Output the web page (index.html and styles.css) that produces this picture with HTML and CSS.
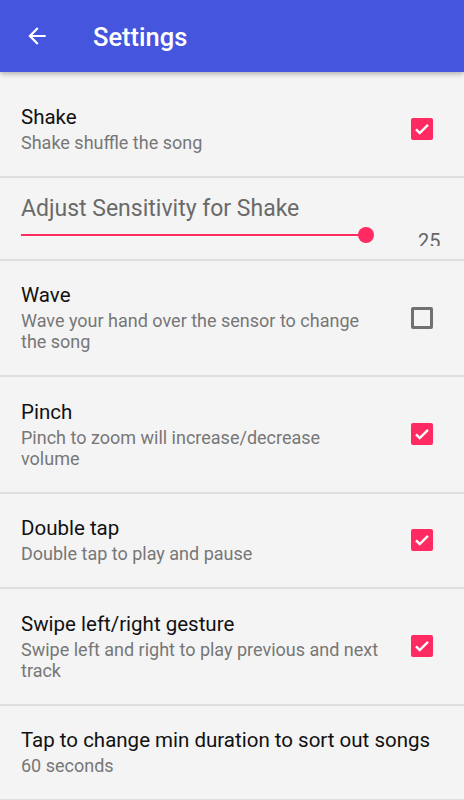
FILE: index.html
```html
<!DOCTYPE html>
<html>
<head>
<meta charset="utf-8">
<link rel="stylesheet" href="styles.css">
</head>
<body>
<header class="appbar">
  <svg class="back" width="24" height="24" viewBox="0 0 24 24"><path d="M20 11H7.83l5.59-5.59L12 4l-8 8 8 8 1.41-1.41L7.83 13H20v-2z" fill="#fff"/></svg>
  <h1 class="title">Settings</h1>
</header>
<main class="list">
  <div class="row">
    <div class="text">
      <div class="t">Shake</div>
      <div class="s">Shake shuffle the song</div>
    </div>
    <span class="cb on"><svg viewBox="0 0 24 24"><path d="M5.5 12.5l4 4 9-9" fill="none" stroke="#fff" stroke-width="2.6"/></svg></span>
  </div>
  <div class="row slider-row">
    <div class="slider-title">Adjust Sensitivity for Shake</div>
    <div class="slider-line">
      <div class="track"><span class="thumb"></span></div>
      <span class="val">25</span>
    </div>
  </div>
  <div class="row">
    <div class="text">
      <div class="t">Wave</div>
      <div class="s">Wave your hand over the sensor to change the song</div>
    </div>
    <span class="cb off"></span>
  </div>
  <div class="row">
    <div class="text">
      <div class="t">Pinch</div>
      <div class="s">Pinch to zoom will increase/decrease volume</div>
    </div>
    <span class="cb on"><svg viewBox="0 0 24 24"><path d="M5.5 12.5l4 4 9-9" fill="none" stroke="#fff" stroke-width="2.6"/></svg></span>
  </div>
  <div class="row">
    <div class="text">
      <div class="t">Double tap</div>
      <div class="s">Double tap to play and pause</div>
    </div>
    <span class="cb on"><svg viewBox="0 0 24 24"><path d="M5.5 12.5l4 4 9-9" fill="none" stroke="#fff" stroke-width="2.6"/></svg></span>
  </div>
  <div class="row">
    <div class="text">
      <div class="t">Swipe left/right gesture</div>
      <div class="s">Swipe left and right to play previous and next track</div>
    </div>
    <span class="cb on"><svg viewBox="0 0 24 24"><path d="M5.5 12.5l4 4 9-9" fill="none" stroke="#fff" stroke-width="2.6"/></svg></span>
  </div>
  <div class="row row-full">
    <div class="text">
      <div class="t">Tap to change min duration to sort out songs</div>
      <div class="s">60 seconds</div>
    </div>
  </div>
</main>
</body>
</html>
```
FILE: styles.css
```css
* { box-sizing: border-box; }
html, body { margin: 0; padding: 0; }
body {
  width: 464px;
  height: 800px;
  overflow: hidden;
  background: #f4f4f4;
  font-family: Roboto, "Noto Sans", sans-serif;
}
.appbar {
  height: 72px;
  background: #4655dd;
  display: flex;
  align-items: center;
  padding-left: 24px;
  box-shadow: 0 2px 5px rgba(0,0,0,0.28);
  position: relative;
  z-index: 1;
}
.back { width: 26px; height: 26px; }
.title {
  margin: 0 0 0 43px;
  color: #fff;
  font-size: 25.5px;
  font-weight: 500;
  padding-top: 2px;
}
.list { display: flex; flex-direction: column; padding-top: 10px; }
.row {
  display: flex;
  align-items: center;
  padding: 22.75px 31px 22.75px 21px;
  border-bottom: 2px solid #dedede;
}
.text { flex: 1; padding-right: 30px; }
.row-full { padding-right: 10px; }
.row-full .text { padding-right: 0; }
.t { font-size: 20.5px; color: #111; line-height: 24px; }
.s { font-size: 18px; color: #777; line-height: 21px; margin-top: 3px; }
.cb {
  width: 22px; height: 22px;
  border-radius: 2px;
  flex: none;
  display: flex;
}
.cb svg { width: 22px; height: 22px; }
.cb.on { background: #ff2a61; }
.cb.off { border: 3px solid #707070; }
.slider-row {
  flex-direction: column;
  align-items: stretch;
  height: 83px;
  padding: 17px 0 0 21px;
}
.slider-title { font-size: 23px; color: #6a6a6a; line-height: 28px; }
.slider-line {
  display: flex;
  align-items: center;
  height: 24px;
}
.track {
  width: 345px;
  height: 2px;
  background: #ff2a61;
  position: relative;
}
.thumb {
  position: absolute;
  right: -8px; top: -7px;
  width: 16px; height: 16px;
  border-radius: 50%;
  background: #ff2a61;
}
.val {
  margin-left: 52px;
  font-size: 20px;
  line-height: 20px;
  color: #666;
  height: 15px;
  overflow: hidden;
  align-self: flex-end;
  margin-bottom: 1px;
}
```
